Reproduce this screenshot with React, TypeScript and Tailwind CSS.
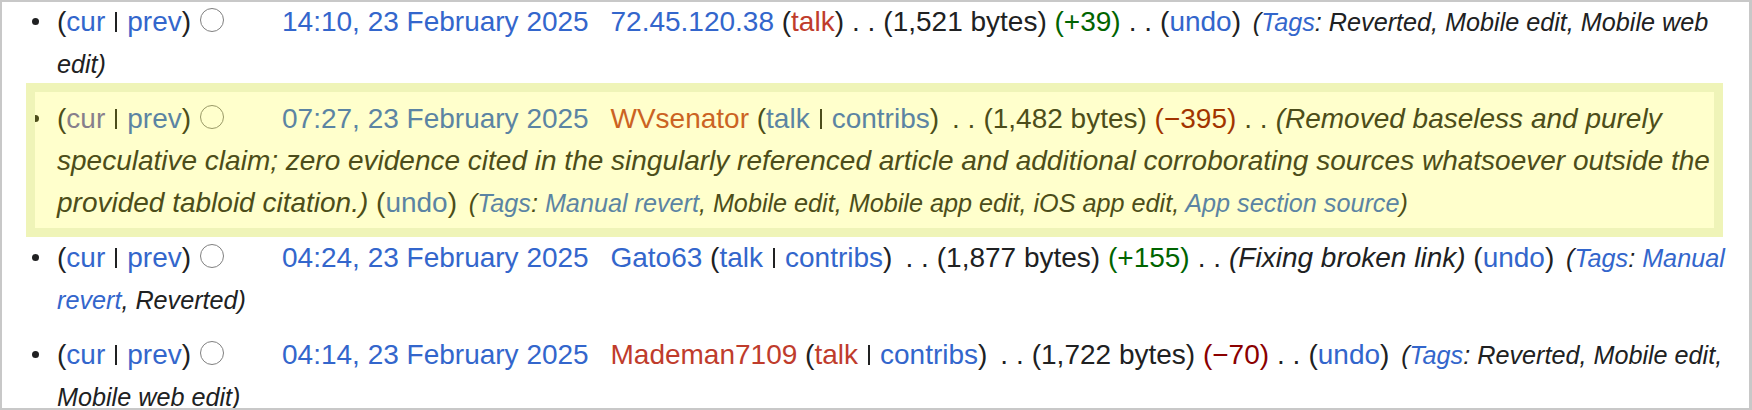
const link = "text-[#3366cc]";
const red = "text-[#bf3c2c]";
const visited = "text-[#6a60b0]";

function Bullet() {
  return <span className="inline-block w-[7px] h-[7px] rounded-full bg-[#202122] -ml-[25px] mr-[18px] align-[6px]" />;
}

function Bar() {
  return <span className="inline-block w-[2px] h-[20px] bg-[#202122] mx-[10px] align-[-1px]" />;
}

function Radio() {
  return <span className="inline-block w-[24px] h-[24px] rounded-full border-[1.5px] border-[#808080] bg-white ml-[9px] mr-[58px] align-[-1px]" />;
}

function CurPrev({ curClass = link }: { curClass?: string }) {
  return (
    <span>
      (<span className={curClass}>cur</span>
      <Bar />
      <span className={link}>prev</span>)
    </span>
  );
}

function Sep() {
  return <span className="mx-[8px]">. .</span>;
}

function Tags({ children }: { children: React.ReactNode }) {
  return <i className="ml-[4px] text-[25.2px]">{children}</i>;
}

export default function App() {
  return (
    <div className="w-[1752px] h-[410px] overflow-hidden bg-white border-2 border-r-[3px] border-[#c8c8c8]" style={{ fontFamily: '"Liberation Sans", Arial, sans-serif' }}>
      <ul className="-mt-[1px] pl-[55px] pr-[10px] text-[28px] leading-[42px] text-[#202122]">
        {/* row 1 */}
        <li className="mb-[13px]">
          <Bullet />
          <CurPrev />
          <Radio />
          <span className={link}>14:10, 23 February 2025</span>{" "}
          <span className="ml-[14px]">
            <span className={link}>72.45.120.38</span> (<span className={red}>talk</span>)
          </span>
          <Sep />
          (1,521 bytes) <span className="text-[#006400]">(+39)</span>
          <Sep />
          (<span className={link}>undo</span>){" "}
          <Tags>
            (<span className={link}>Tags</span>: Reverted, Mobile edit, Mobile web edit)
          </Tags>
        </li>

        {/* row 2, highlighted */}
        <li className="relative mb-[13px]">
          <Bullet />
          <CurPrev curClass={visited} />
          <Radio />
          <span className={link}>07:27, 23 February 2025</span>{" "}
          <span className="ml-[14px]">
            <span className={red}>WVsenator</span> (<span className={link}>talk</span>
            <Bar />
            <span className={link}>contribs</span>)
          </span>
          <span className="ml-[5px]" />
          <Sep />
          (1,482 bytes) <span className="text-[#8b0000]">(−395)</span>
          <Sep />
          <i>
            (Removed baseless and purely speculative claim; zero evidence cited in the singularly referenced article and additional corroborating sources whatsoever outside the provided tabloid citation.)
          </i>{" "}
          (<span className={link}>undo</span>){" "}
          <Tags>
            (<span className={link}>Tags</span>: <span className={link}>Manual revert</span>, Mobile edit, Mobile app edit, iOS app edit,{" "}
            <span className={link}>App section source</span>)
          </Tags>
          <div className="pointer-events-none absolute -left-[31px] -top-[15px] w-[1697px] h-[154px] border-[9px] border-[#eff4b8]">
            <div className="w-full h-full bg-[rgba(255,255,0,0.2)]" />
          </div>
        </li>

        {/* row 3 */}
        <li className="mb-[13px]">
          <Bullet />
          <CurPrev />
          <Radio />
          <span className={link}>04:24, 23 February 2025</span>{" "}
          <span className="ml-[14px]">
            <span className={link}>Gato63</span> (<span className={link}>talk</span>
            <Bar />
            <span className={link}>contribs</span>)
          </span>
          <span className="ml-[5px]" />
          <Sep />
          (1,877 bytes) <span className="text-[#006400]">(+155)</span>
          <Sep />
          <i>(Fixing broken link)</i> (<span className={link}>undo</span>){" "}
          <Tags>
            (<span className={link}>Tags</span>: <span className={link}>Manual revert</span>, Reverted)
          </Tags>
        </li>

        {/* row 4 */}
        <li className="mb-[13px]">
          <Bullet />
          <CurPrev />
          <Radio />
          <span className={link}>04:14, 23 February 2025</span>{" "}
          <span className="ml-[14px]">
            <span className={red}>Mademan7109</span> (<span className={red}>talk</span>
            <Bar />
            <span className={link}>contribs</span>)
          </span>
          <span className="ml-[5px]" />
          <Sep />
          (1,722 bytes) <span className="text-[#8b0000]">(−70)</span>
          <Sep />
          (<span className={link}>undo</span>){" "}
          <Tags>
            (<span className={link}>Tags</span>: Reverted, Mobile edit, Mobile web edit)
          </Tags>
        </li>
      </ul>
    </div>
  );
}
